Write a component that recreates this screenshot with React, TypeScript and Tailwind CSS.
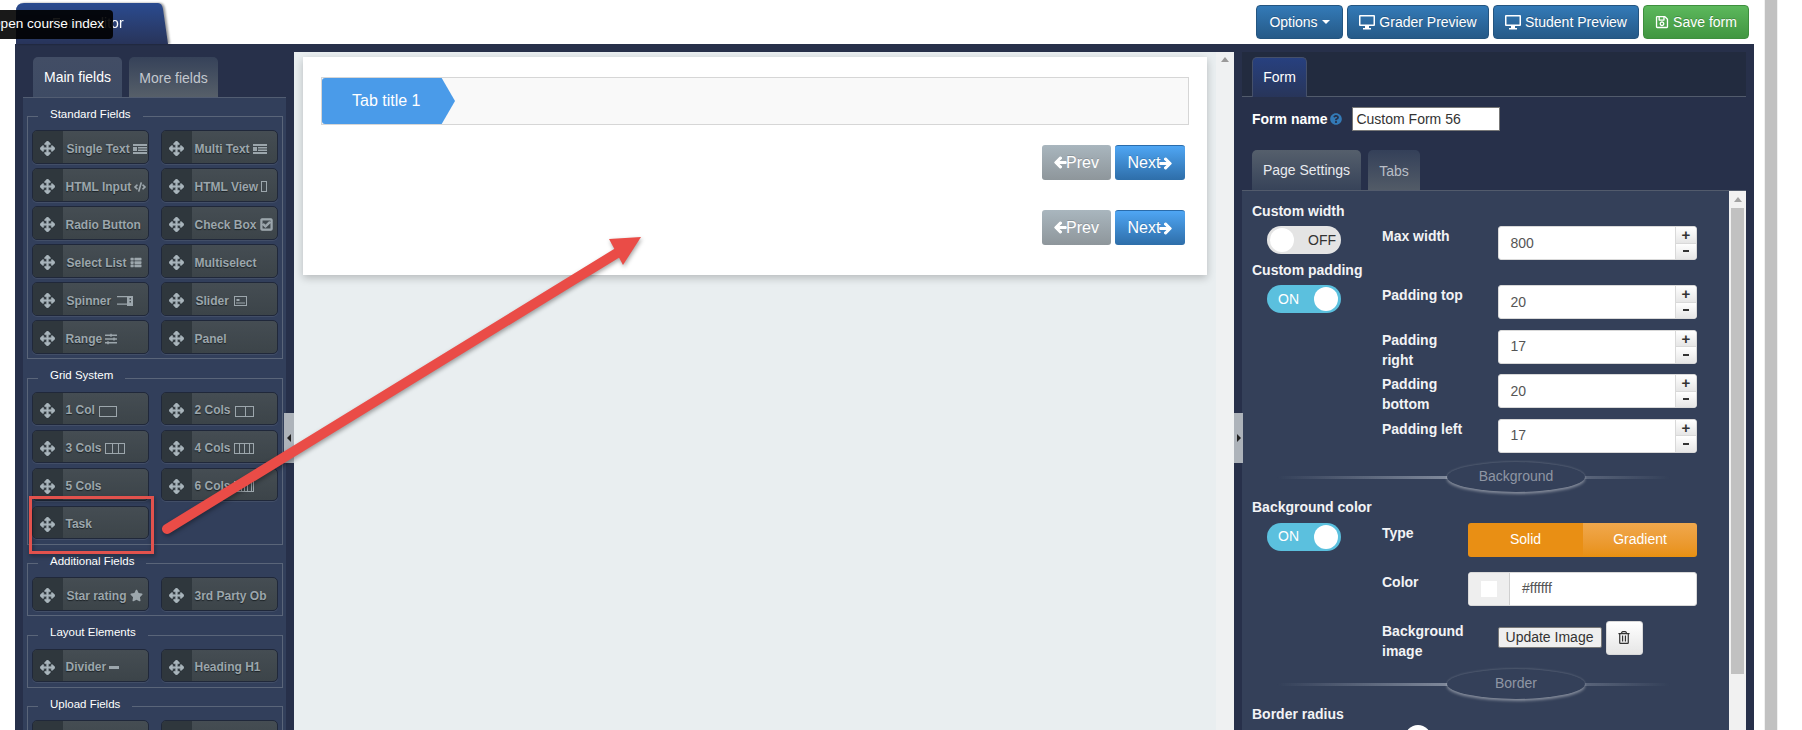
import React from "react";
import { FaArrowsAlt, FaCode, FaRegCheckSquare, FaThList, FaSlidersH, FaStar, FaQuestionCircle, FaRegSave, FaRegTrashAlt, FaArrowLeft, FaArrowRight } from "react-icons/fa";

const Monitor = () => (
  <svg viewBox="0 0 16 15" className="w-[16px] h-[15px]" fill="currentColor">
    <path fillRule="evenodd" d="M1 0h14a1 1 0 0 1 1 1v9a1 1 0 0 1-1 1H1a1 1 0 0 1-1-1V1a1 1 0 0 1 1-1zm.5 1.500v8h13v-8zM6 11h4v2h2v1.500H4V13h2z" />
  </svg>
);
const ListBox = () => (
  <svg viewBox="0 0 14 10" className="w-[14px] h-[10px]" fill="currentColor">
    <path d="M0 0h14v2H0zM5 3h9v1.500H5zM5 5.500h9V7H5zM0 8h14v2H0zM0 3h4v4H0z" />
  </svg>
);
const Tofu = () => (
  <svg viewBox="0 0 6 11" className="w-[6px] h-[11px]" fill="none" stroke="currentColor"><rect x=".5" y=".5" width="5" height="10" /></svg>
);
const SpinnerIcon = () => (
  <svg viewBox="0 0 16 10" className="w-[16px] h-[10px]" fill="currentColor">
    <path fillRule="evenodd" d="M0 0h10v1.200H0zM0 7.500h10v1.200H0zM10 0h6v10h-6zM12.500 2v1.500h1.500V2zM12.500 5v1.500h1.500V5z" />
  </svg>
);
const SliderIcon = () => (
  <svg viewBox="0 0 13 10" className="w-[13px] h-[10px]" fill="none" stroke="currentColor">
    <rect x=".5" y=".5" width="12" height="9" />
    <path d="M2 7h9" />
    <rect x="2.500" y="3" width="3" height="2" fill="currentColor" stroke="none" />
  </svg>
);
const Cols = ({ n, w }: { n: number; w: number }) => (
  <svg viewBox={`0 0 ${w} 11`} className="h-[11px]" width={w} fill="none" stroke="currentColor">
    <rect x=".5" y=".5" width={w - 1} height="10" />
    {Array.from({ length: n - 1 }).map((_, i) => (
      <path key={i} d={`M${Math.round(((i + 1) * w) / n) + 0.5} 0v11`} />
    ))}
  </svg>
);
const Dash = () => <span className="inline-block w-[10px] h-[3px] bg-current" />;

type Item = { t: string; icon?: React.ReactNode; far?: boolean };

const Tool = ({ t, icon, far }: Item) => (
  <div className="h-[33.500px] rounded-[5px] border border-[#20283a] bg-gradient-to-b from-[#454d53] to-[#3c4449] flex items-center overflow-hidden text-[#9ca6ac] shadow-[0_1px_0_rgba(255,255,255,0.08)]">
    <div className="w-[30px] h-full bg-[#2f373d] flex items-center justify-center pr-[1px] pt-[4px] shrink-0 text-[#a9b5bc]">
      <FaArrowsAlt className="w-[15px] h-[15px] [stroke-width:20px]" />
    </div>
    <div className={`${far ? "ml-[3.500px]" : "ml-[2.500px]"} mt-[4px] flex items-center gap-[3px] whitespace-nowrap text-[12px] font-bold [text-shadow:0_1px_1px_#1c2226]`}>
      <span>{t}</span>
      {icon}
    </div>
  </div>
);

const Group = ({ title, items, first }: { title: string; items: Item[]; first?: boolean }) => (
  <fieldset className={`border border-[#5a6579] px-[4px] pb-[4.500px] pt-[3.500px] ${first ? "" : "mt-[9px]"}`}>
    <legend className="ml-[6px] px-[12px] h-[20px] leading-[14px] text-[11.500px] text-white">{title}</legend>
    <div className="grid grid-cols-[117px_117px] gap-x-[12px] gap-y-[4.500px]">
      {items.map((i, k) => (
        <Tool key={k} {...i} />
      ))}
    </div>
  </fieldset>
);

const LeftPanel = () => (
  <div className="w-[279px] shrink-0 h-full bg-[#27304a] pt-[13px] px-[8px] overflow-hidden">
    <div className="flex pl-[10px] gap-[7px] h-[40px]">
      <div className="w-[89px] rounded-t-[5px] bg-gradient-to-b from-[#424d65] to-[#3e4b64] text-white text-[14px] flex items-center justify-center">Main fields</div>
      <div className="w-[89px] rounded-t-[5px] bg-gradient-to-b from-[#364259] to-[#565f69] text-[#c3c8cf] text-[14px] flex items-center justify-center pt-[2px]">More fields</div>
    </div>
    <div className="border-t border-[#525d72] bg-[#323f5b] h-[700px] px-[4px] pt-[8.500px]">
      <Group
        first
        title="Standard Fields"
        items={[
          { t: "Single Text", icon: <ListBox />, far: true },
          { t: "Multi Text", icon: <ListBox /> },
          { t: "HTML Input", icon: <FaCode className="w-[12px] h-[12px]" /> },
          { t: "HTML View", icon: <Tofu /> },
          { t: "Radio Button" },
          { t: "Check Box", icon: <FaRegCheckSquare className="w-[13px] h-[13px] [stroke-width:40px]" /> },
          { t: "Select List", icon: <FaThList className="w-[12px] h-[11px]" />, far: true },
          { t: "Multiselect" },
          { t: "Spinner", icon: <span className="ml-[3px] flex"><SpinnerIcon /></span>, far: true },
          { t: "Slider", icon: <span className="ml-[2px] flex"><SliderIcon /></span>, far: true },
          { t: "Range", icon: <FaSlidersH className="w-[12px] h-[12px]" /> },
          { t: "Panel" },
        ]}
      />
      <Group
        title="Grid System"
        items={[
          { t: "1 Col", icon: <span className="ml-[1px] mt-[2px] flex"><Cols n={1} w={18} /></span> },
          { t: "2 Cols", icon: <span className="ml-[1px] mt-[2px] flex"><Cols n={2} w={19} /></span> },
          { t: "3 Cols", icon: <Cols n={3} w={20} /> },
          { t: "4 Cols", icon: <Cols n={4} w={20} /> },
          { t: "5 Cols" },
          { t: "6 Cols", icon: <Cols n={6} w={20} /> },
          { t: "Task" },
        ]}
      />
      <Group
        title="Additional Fields"
        items={[
          { t: "Star rating", icon: <FaStar className="w-[13px] h-[13px]" />, far: true },
          { t: "3rd Party Ob" },
        ]}
      />
      <Group
        title="Layout Elements"
        items={[
          { t: "Divider", icon: <Dash /> },
          { t: "Heading H1" },
        ]}
      />
      <Group title="Upload Fields" items={[{ t: "" }, { t: "" }]} />
    </div>
  </div>
);

const NavBtn = ({ kind }: { kind: "prev" | "next" }) =>
  kind === "prev" ? (
    <div className="w-[69px] h-[35px] rounded-[3px] bg-gradient-to-b from-[#a9b6be] to-[#8e969b] text-white text-[16px] flex items-center justify-center [text-shadow:0_-1px_0_rgba(0,0,0,0.15)]">
      <FaArrowLeft className="w-[13px] h-[13px] [stroke-width:40px] -mr-[1px]" />
      <span>Prev</span>
    </div>
  ) : (
    <div className="w-[70px] h-[35px] rounded-[3px] border-t border-[#2a6cab] bg-gradient-to-b from-[#4fa6f4] to-[#2e6ea9] text-white text-[16px] flex items-center justify-center [text-shadow:0_-1px_0_rgba(0,0,0,0.15)]">
      <span>Next</span>
      <FaArrowRight className="w-[13px] h-[13px] [stroke-width:40px] -ml-[1px]" />
    </div>
  );

const NavRow = ({ cls }: { cls: string }) => (
  <div className={`flex justify-end gap-[4px] pr-[4px] ${cls}`}>
    <NavBtn kind="prev" />
    <NavBtn kind="next" />
  </div>
);

const Middle = () => (
  <div className="w-[940px] shrink-0 h-[678px] mt-[8px] bg-[#e9eef0] flex relative">
    <div className="w-[922px] pl-[9px] pt-[5px]">
      <div className="w-[904px] bg-white pt-[20px] px-[18px] pb-[30px] shadow-[0_3px_8px_rgba(0,0,0,0.22)]">
        <div className="h-[48px] border border-[#d6d6d6] bg-[#f9f9f9] flex">
          <div className="w-[133px] h-full bg-[#4a9be9] rounded-l-[3px] [clip-path:polygon(0_0,90%_0,100%_50%,90%_100%,0_100%)] text-white text-[16px] flex items-center pl-[30px]">Tab title 1</div>
        </div>
        <NavRow cls="mt-[20px]" />
        <NavRow cls="mt-[30px]" />
      </div>
    </div>
    <div className="flex-1 bg-[#eff1f2] flex justify-center pt-[5px]">
      <span className="w-0 h-0 border-x-[4px] border-x-transparent border-b-[5px] border-b-[#9a9a9a]" />
    </div>
    <div className="absolute -left-[10px] top-[361px] w-[10px] h-[50px] bg-[#adb3ba] flex items-center justify-center">
      <span className="w-0 h-0 border-y-[4px] border-y-transparent border-r-[4px] border-r-[#222]" />
    </div>
    <div className="absolute right-[-9px] top-[361px] w-[9px] h-[50px] bg-[#adb3ba] flex items-center justify-center">
      <span className="w-0 h-0 border-y-[4px] border-y-transparent border-l-[4px] border-l-[#222]" />
    </div>
  </div>
);

const Toggle = ({ on }: { on: boolean }) => (
  <div className={`w-[74px] h-[28px] rounded-full flex items-center justify-between text-[14px] ${on ? "bg-[#5bc0de] text-white pl-[11px] pr-[3px]" : "bg-[#e4e4e4] text-[#333] pl-[3px] pr-[5px]"}`}>
    {on ? <span>ON</span> : <span className="w-[24px] h-[24px] rounded-full bg-white" />}
    {on ? <span className="w-[24px] h-[24px] rounded-full bg-white" /> : <span>OFF</span>}
  </div>
);

const Heading = ({ t, cls }: { t: string; cls: string }) => (
  <div className={`text-[14px] leading-[14px] font-bold text-[#f2f3f5] ${cls}`}>{t}</div>
);

const Label = ({ t, w }: { t: string; w: string }) => (
  <div className={`${w} shrink-0 text-[14px] leading-[20px] font-bold text-[#f2f3f5]`}>{t}</div>
);

const NumberRow = ({ label, value, last }: { label: string; value: string; last?: boolean }) => (
  <div className={`flex ${last ? "" : "min-h-[44.600px]"}`}>
    <Label t={label} w="w-[115.500px] pr-[31px]" />
    <div className="w-[199.500px] h-[34px] flex rounded-[3px] overflow-hidden border border-[#d9d9d9] bg-white">
      <div className="flex-1 pl-[12px] flex items-center text-[14px] text-[#555]">{value}</div>
      <div className="w-[21px] flex flex-col border-l border-[#d9d9d9]">
        <div className="flex-1 bg-gradient-to-b from-white to-[#e6e6e6] flex items-center justify-center text-[15px] font-bold leading-none text-[#333] border-b border-[#d9d9d9]">+</div>
        <div className="flex-1 bg-gradient-to-b from-white to-[#e6e6e6] flex items-center justify-center">
          <span className="w-[6px] h-[2px] bg-[#333]" />
        </div>
      </div>
    </div>
  </div>
);

const Divider = ({ t, cls }: { t: string; cls: string }) => (
  <div className={`relative h-[30px] flex items-center ${cls}`}>
    <div className="absolute left-[25px] w-[393px] top-[14px] h-[3px] blur-[0.5px] bg-gradient-to-r from-transparent via-[#8b94a5] to-transparent" />
    <div className="relative ml-[195px] w-[138px] h-[30px] rounded-[50%] bg-[#344059] shadow-[0_2px_3px_rgba(255,255,255,0.4),0_-1px_2px_rgba(255,255,255,0.12)] flex items-center justify-center text-[14px] text-[#8f96a4]">{t}</div>
  </div>
);

const RightPanel = () => (
  <div className="w-[520px] shrink-0 h-full bg-[#27304a] pt-[8px] px-[8px] overflow-hidden">
    <div className="h-[45px] bg-[#222b3f] border-b border-[#525b6c] pl-[10px] pt-[5px]">
      <div className="w-[55px] h-[40px] rounded-t-[5px] border-x border-t border-[#45506a] bg-gradient-to-b from-[#27407f] to-[#28355a] text-white text-[14px] flex items-center justify-center">Form</div>
    </div>
    <div className="flex items-center pl-[10px] h-[24px] mt-[10px]">
      <span className="text-[14px] font-bold text-white">Form name</span>
      <FaQuestionCircle className="w-[12px] h-[12px] text-[#337ab7] ml-[3px]" />
      <input readOnly value="Custom Form 56" className="ml-[10px] w-[148px] h-[24px] bg-white border border-[#777] px-[3px] text-[14px] text-[#333] outline-none" />
    </div>
    <div className="flex pl-[10px] gap-[7px] mt-[19px] h-[40px]">
      <div className="w-[109px] rounded-t-[5px] bg-gradient-to-b from-[#555f6c] to-[#374359] text-[#e8eaee] text-[14px] flex items-center justify-center">Page Settings</div>
      <div className="w-[52px] rounded-t-[5px] bg-gradient-to-b from-[#344059] to-[#525b67] text-[#b9bec6] text-[14px] flex items-center justify-center pt-[2px]">Tabs</div>
    </div>
    <div className="border-t border-[#525b6c] h-[560px] bg-[#344059] flex">
      <div className="flex-1 pl-[10px] pt-[13px]">
        <Heading t="Custom width" cls="" />
        <div className="flex mt-[8px]">
          <div className="w-[130px] pl-[15px]"><Toggle on={false} /></div>
          <NumberRow label="Max width" value="800" last />
        </div>
        <Heading t="Custom padding" cls="mt-[3px]" />
        <div className="flex mt-[8px]">
          <div className="w-[130px] pl-[15px]"><Toggle on /></div>
          <div>
            <NumberRow label="Padding top" value="20" />
            <NumberRow label="Padding right" value="17" />
            <NumberRow label="Padding bottom" value="20" />
            <NumberRow label="Padding left" value="17" last />
          </div>
        </div>
        <Divider t="Background" cls="mt-[9px]" />
        <Heading t="Background color" cls="mt-[8px]" />
        <div className="flex mt-[9px]">
          <div className="w-[130px] pl-[15px]"><Toggle on /></div>
          <div>
            <div className="flex">
              <Label t="Type" w="w-[86px]" />
              <div className="w-[229px] h-[34px] rounded-[3px] overflow-hidden flex text-white text-[14px]">
                <div className="w-[115px] bg-[#e98f14] flex items-center justify-center">Solid</div>
                <div className="flex-1 bg-gradient-to-b from-[#f0a84c] to-[#e8900f] flex items-center justify-center">Gradient</div>
              </div>
            </div>
            <div className="flex mt-[15px]">
              <Label t="Color" w="w-[86px]" />
              <div className="w-[229px] h-[34px] rounded-[3px] overflow-hidden flex bg-white border border-[#d9d9d9]">
                <div className="w-[41px] bg-[#eeeeee] border-r border-[#cfcfcf] flex items-center justify-center">
                  <span className="w-[16px] h-[16px] bg-white" />
                </div>
                <div className="pl-[12px] flex items-center text-[14px] text-[#555]">#ffffff</div>
              </div>
            </div>
            <div className="flex mt-[15px]">
              <Label t="Background image" w="w-[115.500px] pr-[20px]" />
              <div className="h-[34px] flex items-center">
                <div className="w-[104px] h-[21px] border border-[#777] bg-[#efefef] text-[14px] text-[#333] flex items-center justify-center rounded-[2px]">Update Image</div>
                <div className="ml-[4px] w-[37px] h-[34px] rounded-[3px] border border-[#d9d9d9] bg-gradient-to-b from-white to-[#e6e6e6] flex items-center justify-center text-[#333]">
                  <FaRegTrashAlt className="w-[12px] h-[13px]" />
                </div>
              </div>
            </div>
          </div>
        </div>
        <Divider t="Border" cls="mt-[8px]" />
        <Heading t="Border radius" cls="mt-[8px]" />
        <div className="mt-[4px] ml-[153px] w-[26px] h-[26px] rounded-full bg-white" />
      </div>
      <div className="w-[17px] shrink-0 bg-[#f1f1f1] flex flex-col items-center pt-[6px]">
        <span className="w-0 h-0 border-x-[4px] border-x-transparent border-b-[5px] border-b-[#a3a3a3]" />
        <div className="w-[13px] h-[466px] bg-[#c1c1c1] mt-[6px]" />
      </div>
    </div>
  </div>
);

const HeadBtn = ({ w, green, children }: { w: string; green?: boolean; children: React.ReactNode }) => (
  <div className={`${w} h-[34px] rounded-[4px] border flex items-center justify-center gap-[4px] text-[14px] text-white [text-shadow:0_-1px_0_rgba(0,0,0,0.2)] bg-gradient-to-b ${green ? "from-[#5cb85c] to-[#419641] border-[#3e8f3e]" : "from-[#337ab7] to-[#265a88] border-[#245580]"}`}>
    {children}
  </div>
);

export default function App() {
  return (
    <div className="relative w-[1802px] h-[730px] overflow-hidden bg-white flex [font-family:'Liberation_Sans',Arial,sans-serif]">
      <div className="w-[1764px] shrink-0 flex flex-col">
        <div className="w-[1754px] h-[44px] flex justify-between items-end shrink-0">
          <div className="ml-[16px] [filter:drop-shadow(2px_0_1px_rgba(0,0,0,0.4))]">
            <div className="w-[152px] h-[41px] bg-gradient-to-b from-[#2a4b90] to-[#28345a] text-white text-[14px] flex items-center pl-[36px] [clip-path:path('M0_41V8Q0_0_8_0H142Q146_0_147_6L152_41Z')]">Form editor</div>
          </div>
          <div className="flex gap-[4px] pr-[5px] pb-[5px]">
            <HeadBtn w="w-[87px]">
              <span>Options</span>
              <span className="w-0 h-0 border-x-[4px] border-x-transparent border-t-[4px] border-t-white" />
            </HeadBtn>
            <HeadBtn w="w-[142px]"><Monitor /><span>Grader Preview</span></HeadBtn>
            <HeadBtn w="w-[146px]"><Monitor /><span>Student Preview</span></HeadBtn>
            <HeadBtn w="w-[106px]" green><FaRegSave className="w-[14px] h-[14px]" /><span>Save form</span></HeadBtn>
          </div>
        </div>
        <div className="ml-[15px] w-[1739px] h-[686px] flex bg-[#27304a]">
          <LeftPanel />
          <Middle />
          <RightPanel />
        </div>
      </div>
      <div className="w-[14px] h-full bg-[#f0f0f0] flex justify-center shrink-0">
        <div className="w-[12px] h-full bg-[#c1c1c1]" />
      </div>

      <div className="absolute -left-[18px] top-[10px] w-[131px] h-[29px] rounded-[4px] bg-black/90 text-white text-[13.600px] flex items-center pl-[8px] whitespace-nowrap">Open course index</div>

      <svg className="absolute left-0 top-0 w-[1802px] h-[730px] pointer-events-none [filter:drop-shadow(1px_2px_2px_rgba(0,0,0,0.35))]" viewBox="0 0 1802 730">
        <rect x="30.500" y="497.500" width="122" height="55" fill="none" stroke="#e2524d" strokeWidth="3" />
        <path d="M167 529L622 250" stroke="#ea4c47" strokeWidth="10" strokeLinecap="round" />
        <path d="M641 237L609 239L623 265Z" fill="#ea4c47" />
      </svg>
    </div>
  );
}
